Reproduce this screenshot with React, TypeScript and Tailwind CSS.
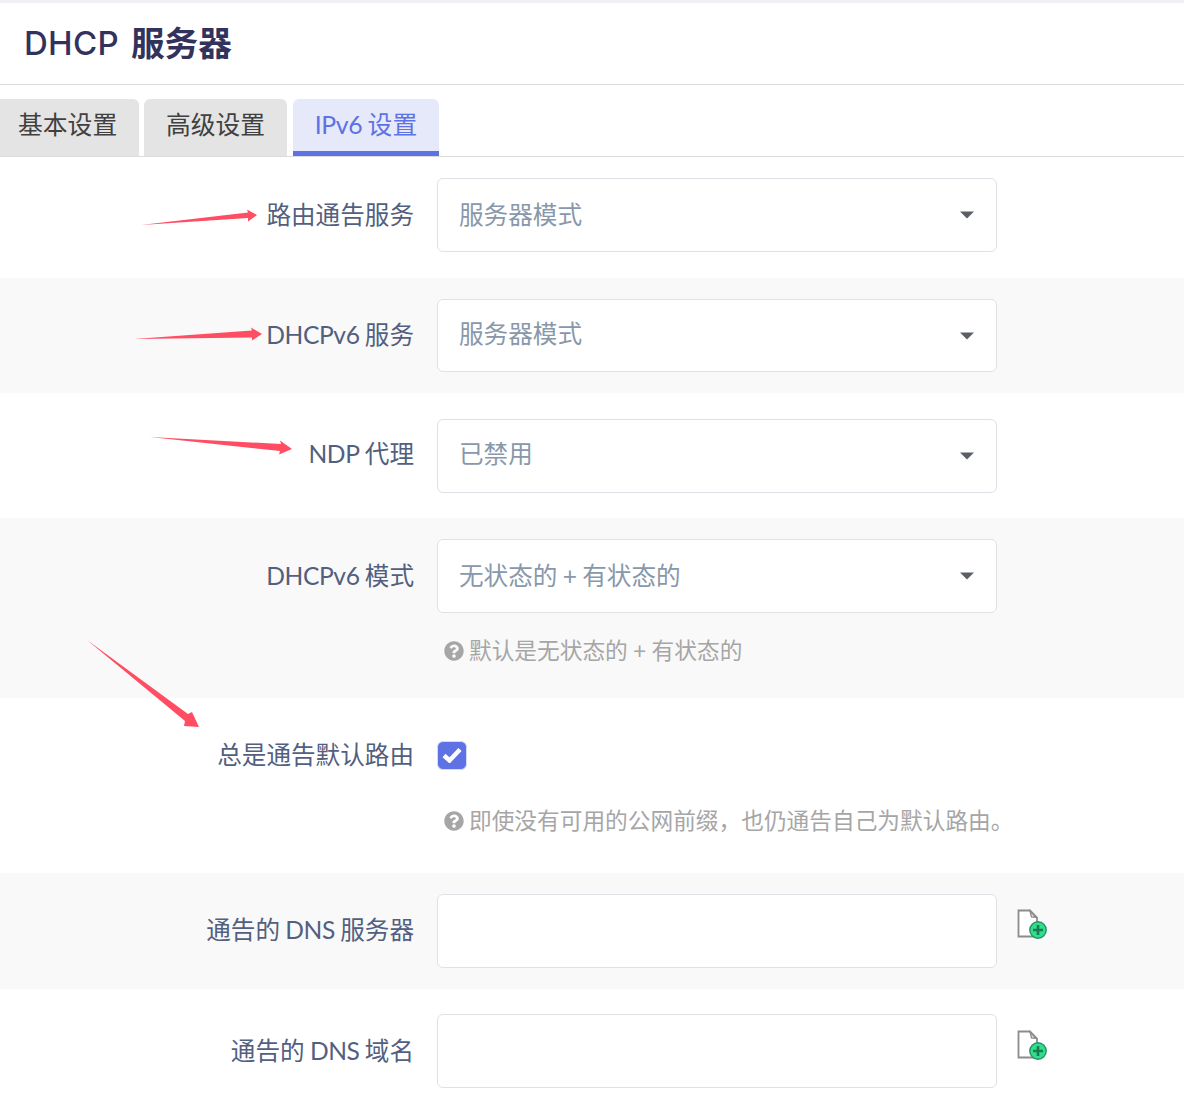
import React from "react";
import { FaQuestionCircle } from "react-icons/fa";

const FONT = "font-['Lato','Noto_Sans_CJK_SC',sans-serif]";

function Caret() {
  return (
    <svg width="14" height="8" viewBox="0 0 14 8" className="shrink-0">
      <path d="M0 0.5h14L7 7.5z" fill="#5a5f66" />
    </svg>
  );
}

function L({ children }: { children: React.ReactNode }) {
  return <span className="tracking-[-0.4px]">{children}</span>;
}

function Select({ value, rowClass, textClass }: { value: string; rowClass?: string; textClass?: string }) {
  return (
    <div className={`flex ${rowClass ?? "h-[74px]"} w-[560px] items-center justify-between rounded-[6px] border border-[#dee2e6] bg-white pl-[21px] pr-[22px]`}>
      <span className={`text-[24.6px] leading-none text-[#8898aa] [word-spacing:-1px] ${textClass ?? ""}`}>{value}</span>
      <Caret />
    </div>
  );
}

function Label({ children }: { children: React.ReactNode }) {
  return <div className="w-[414px] shrink-0 text-right text-[24.6px] leading-[36px] text-[#525f7f] [word-spacing:-1px]">{children}</div>;
}

function Hint({ children }: { children: React.ReactNode }) {
  return (
    <div className="ml-[444px] flex items-center gap-[5px] text-[22.7px] leading-[30px] whitespace-nowrap text-[#a6a6a6] [word-spacing:-0.5px]">
      <FaQuestionCircle className="h-[20px] w-[20px] shrink-0" />
      <span>{children}</span>
    </div>
  );
}

function AddFile() {
  return (
    <svg width="32" height="32" viewBox="0 0 32 32" className="ml-[20px] shrink-0">
      <path d="M1.5 1.5h11.5l7 7v19h-18.5z" fill="#fff" stroke="#8c8c8c" strokeWidth="1.8" />
      <path d="M13 2l3 3 3 3.5-4.5-.5z" fill="#dcdcdc" stroke="#8c8c8c" strokeWidth="1.3" />
      <circle cx="21" cy="21" r="8.2" fill="#2fe08a" stroke="#2b8f6a" strokeWidth="1.4" />
      <path d="M21 16v10M16 21h10" stroke="#1b7a55" strokeWidth="2.6" />
    </svg>
  );
}

function Arrows() {
  return (
    <svg width="1184" height="1113" viewBox="0 0 1184 1113" className="pointer-events-none absolute left-0 top-0">
      <g fill="#ff4d63">
        <path d="M141 225 L248 212.5 L247 209.5 L257 215 L248 221.5 L248 218 Z" />
        <path d="M134 339 L252 330.5 L251 327.5 L262 334 L252 340.5 L252 337.5 Z" />
        <path d="M150 437 L281 444 L280 440.5 L292 449 L279 454.5 L280 451 Z" />
        <path d="M87 640 L188 714 L192 712 L199 727 L184 726 L185 721 Z" />
      </g>
    </svg>
  );
}

export default function App() {
  return (
    <div className={`relative h-[1113px] w-[1184px] overflow-hidden bg-white ${FONT}`}>
      <div className="h-[3px] bg-[#eef0f4]" />
      <div className="flex h-[82px] items-center border-b border-[#dcdcdc] pl-[24px] text-[33px] text-[#32325d]">
        <span className="mr-[12px] font-['Inter'] font-medium tracking-[0.3px]">DHCP</span>
        <span className="text-[33.6px] font-bold">服务器</span>
      </div>
      <div className="flex h-[72px] items-end gap-[5px] border-b border-[#dcdcdc] pt-[14px] text-[24.8px]">
        <div className="flex h-[57px] w-[139px] items-center rounded-tr-[6px] bg-[#e4e4e4] pl-[18px] pb-[5px] text-[#404040]">基本设置</div>
        <div className="flex h-[57px] w-[143px] items-center justify-center rounded-t-[6px] bg-[#e4e4e4] pb-[5px] text-[#404040]">高级设置</div>
        <div className="ml-px flex h-[57px] w-[146px] items-center justify-center rounded-t-[6px] border-b-[5px] border-[#5e72e4] bg-[#e6e9fa] text-[#5e72e4] [word-spacing:-1px]"><L>IPv6</L>&nbsp;设置</div>
      </div>

      <div className="flex h-[121px] items-start gap-[23px] pt-[21px]">
        <div className="flex h-[73px] items-center"><Label>路由通告服务</Label></div>
        <Select value="服务器模式" />
      </div>

      <div className="flex h-[115px] items-start gap-[23px] bg-[#f9f9f9] pt-[21px]">
        <div className="flex h-[71px] items-center"><Label><L>DHCPv6</L> 服务</Label></div>
        <Select value="服务器模式" rowClass="h-[73px]" textClass="mb-[2px]" />
      </div>

      <div className="flex h-[125px] items-start gap-[23px] pt-[26px]">
        <div className="flex h-[70px] items-center"><Label><L>NDP</L> 代理</Label></div>
        <Select value="已禁用" textClass="mb-[3px]" />
      </div>

      <div className="h-[180px] bg-[#f9f9f9] pt-[21px]">
        <div className="flex items-start gap-[23px]">
          <div className="flex h-[73px] items-center"><Label><L>DHCPv6</L> 模式</Label></div>
          <Select value="无状态的 + 有状态的" />
        </div>
        <div className="mt-[23px]"><Hint>默认是无状态的 + 有状态的</Hint></div>
      </div>

      <div className="h-[175px] pt-[39px]">
        <div className="flex items-center gap-[23px]">
          <Label>总是通告默认路由</Label>
          <div className="flex h-[29px] w-[30px] items-center justify-center rounded-[6px] border border-[#d5daf7] bg-[#5e72e4]">
            <svg width="20" height="16" viewBox="0 0 20 16">
              <path d="M2 8.5l5.5 5L18 2.5" fill="none" stroke="#fff" strokeWidth="4.4" />
            </svg>
          </div>
        </div>
        <div className="mt-[33px]"><Hint>即使没有可用的公网前缀，也仍通告自己为默认路由。</Hint></div>
      </div>

      <div className="flex h-[116px] items-start bg-[#f9f9f9] pt-[21px]">
        <div className="flex h-[72px] items-center"><Label>通告的 <L>DNS</L> 服务器</Label></div>
        <div className="ml-[23px] h-[74px] w-[560px] rounded-[6px] border border-[#dee2e6] bg-white" />
        <div className="mt-[15px]"><AddFile /></div>
      </div>

      <div className="flex h-[124px] items-start pt-[25px]">
        <div className="flex h-[74px] items-center"><Label>通告的 <L>DNS</L> 域名</Label></div>
        <div className="ml-[23px] h-[74px] w-[560px] rounded-[6px] border border-[#dee2e6] bg-white" />
        <div className="mt-[16px]"><AddFile /></div>
      </div>

      <Arrows />
    </div>
  );
}
